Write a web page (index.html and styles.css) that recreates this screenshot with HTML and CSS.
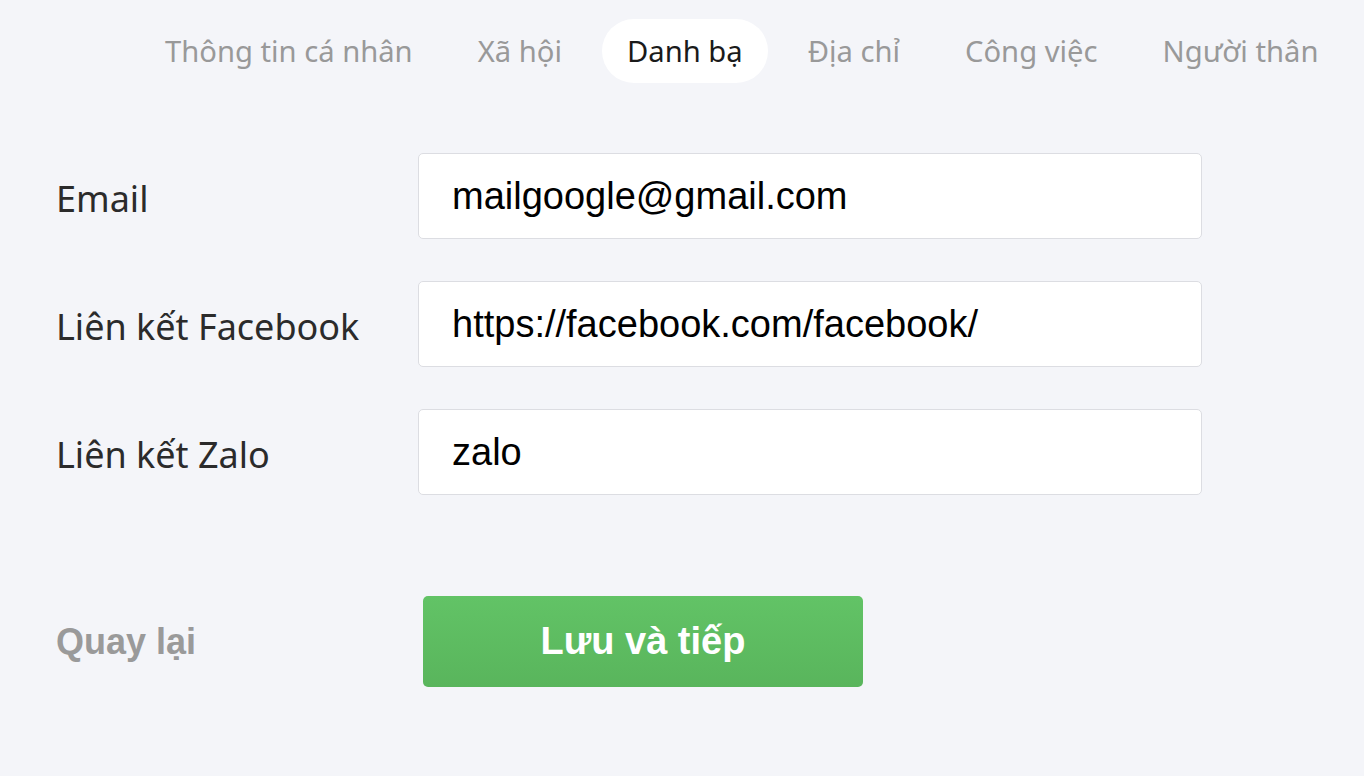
FILE: index.html
```html
<!DOCTYPE html>
<html lang="vi">
<head>
    <meta charset="UTF-8">
    <title>Danh bạ</title>
    <link rel="stylesheet" href="styles.css">
</head>
<body>
    <nav class="tabs">
        <a class="tab">Thông tin cá nhân</a>
        <a class="tab">Xã hội</a>
        <a class="tab active">Danh bạ</a>
        <a class="tab">Địa chỉ</a>
        <a class="tab">Công việc</a>
        <a class="tab">Người thân</a>
    </nav>

    <form class="contact-form">
        <div class="row">
            <label for="email">Email</label>
            <input type="text" id="email" value="mailgoogle@gmail.com">
        </div>
        <div class="row">
            <label for="facebook">Liên kết Facebook</label>
            <input type="text" id="facebook" value="https://facebook.com/facebook/">
        </div>
        <div class="row">
            <label for="zalo">Liên kết Zalo</label>
            <input type="text" id="zalo" value="zalo">
        </div>

        <div class="actions">
            <a class="back">Quay lại</a>
            <button type="submit" class="button">Lưu và tiếp</button>
        </div>
    </form>
</body>
</html>
```

FILE: styles.css
```css
/* Trang danh bạ */
body {
    margin: 0;
    background-color: #f4f5f9;
    font-family: "Noto Sans", sans-serif;
}

.tabs {
    display: flex;
    gap: 15px;
    padding: 19px 0 0 140px;
}
.tab {
    height: 64px;
    line-height: 64px;
    padding: 0 25px;
    border-radius: 32px;
    font-size: 29.2px;
    color: #999999;
    white-space: nowrap;
}
.tab.active {
    background-color: #ffffff;
    color: #1a1a1a;
}

.contact-form {
    display: flex;
    flex-direction: column;
    gap: 42px;
    padding: 70px 0 0 56px;
}
.row {
    display: flex;
    align-items: center;
}
.row label {
    width: 362px;
    padding-top: 4px;
    font-size: 36px;
    color: #2b2b2b;
}
.row input {
    box-sizing: border-box;
    width: 784px;
    height: 86px;
    padding: 0 33px;
    border: 1.5px solid #dcdde2;
    border-radius: 5px;
    background-color: #ffffff;
    font-family: "Liberation Sans", Arial, sans-serif;
    font-size: 38px;
    color: #000000;
    outline: none;
}

.actions {
    display: flex;
    align-items: center;
    margin-top: 59px;
}
.back {
    width: 367px;
    font-family: "Liberation Sans", Arial, sans-serif;
    font-weight: bold;
    font-size: 36px;
    color: #9a9a9a;
}
.button {
    width: 440px;
    height: 91px;
    border: none;
    border-radius: 5px;
    background: linear-gradient(#62c366, #59b55c);
    font-family: "Liberation Sans", Arial, sans-serif;
    font-weight: bold;
    font-size: 38px;
    color: #ffffff;
}
```
